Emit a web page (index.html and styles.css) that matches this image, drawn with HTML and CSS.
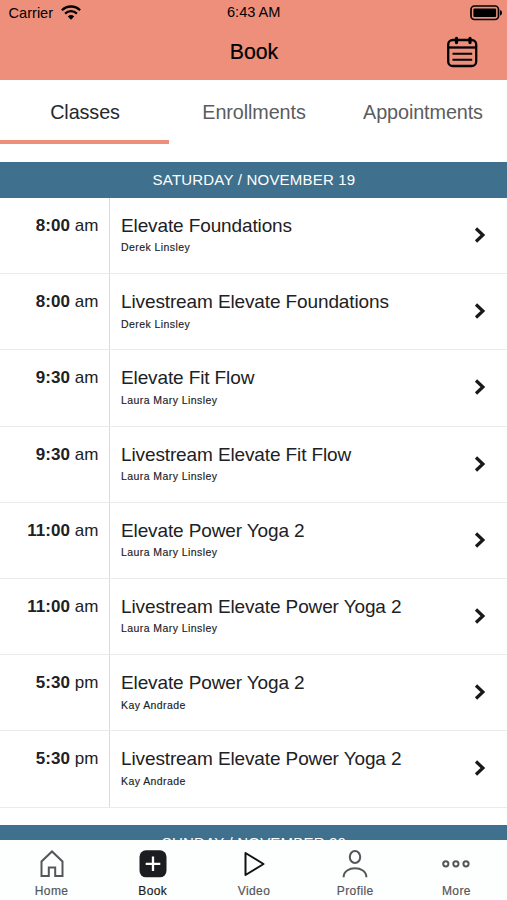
FILE: index.html
```html
<!DOCTYPE html>
<html lang="en">
<head>
<meta charset="utf-8">
<title>Book</title>
<link rel="stylesheet" href="styles.css">
</head>
<body>
<div class="app">
  <header class="header">
    <div class="status">
      <div class="carrier">Carrier
        <svg class="wifi" width="20" height="15" viewBox="0 0 20 15" fill="none" stroke="#000" stroke-width="2.3"><path d="M.9 5.2a13 13 0 0 1 18.2 0M4.1 8.6a8.5 8.5 0 0 1 11.8 0"/><path d="M6.8 11.5a4.8 4.8 0 0 1 6.4 0L10 14.7z" fill="#000" stroke="none"/></svg>
      </div>
      <div class="clock">6:43 AM</div>
      <svg class="battery" width="33" height="16" viewBox="0 0 33 16"><rect x="1" y="1" width="27.5" height="13.5" rx="3.5" fill="none" stroke="#000" stroke-width="1.7"/><rect x="3.4" y="3.4" width="22.7" height="8.7" rx="1"/><path d="M30 5c2.7.6 2.7 5 0 5.600z"/></svg>
    </div>
    <div class="titlebar">
      <h1>Book</h1>
      <svg class="calendar" width="32" height="32" viewBox="0 0 32 32" fill="none" stroke="#000" stroke-width="2.300"><rect x="2.2" y="4" width="28" height="26" rx="4.500"/><path d="M2.200 11.500h28"/><path d="M6.500 17.700h19.700M6.500 23.800h19.700" stroke-width="2.100"/><path d="M10.500 2.500v4M24 2.500v4" stroke-width="3.300" stroke-linecap="round"/></svg>
    </div>
  </header>
  <nav class="tabs">
    <div class="tab active">Classes</div>
    <div class="tab">Enrollments</div>
    <div class="tab">Appointments</div>
  </nav>
  <main class="schedule">
    <h2 class="day">SATURDAY / NOVEMBER 19</h2>
    <ul class="classes">
      <li><div class="time"><b>8:00</b> am</div><div class="info"><h3>Elevate Foundations</h3><p>Derek Linsley</p></div><svg class="chevron" viewBox="0 0 12 16"><path d="M2 1.500l6.900 6.500L2 14.500"/></svg></li>
      <li><div class="time"><b>8:00</b> am</div><div class="info"><h3>Livestream Elevate Foundations</h3><p>Derek Linsley</p></div><svg class="chevron" viewBox="0 0 12 16"><path d="M2 1.500l6.900 6.500L2 14.500"/></svg></li>
      <li><div class="time"><b>9:30</b> am</div><div class="info"><h3>Elevate Fit Flow</h3><p>Laura Mary Linsley</p></div><svg class="chevron" viewBox="0 0 12 16"><path d="M2 1.500l6.900 6.500L2 14.500"/></svg></li>
      <li><div class="time"><b>9:30</b> am</div><div class="info"><h3>Livestream Elevate Fit Flow</h3><p>Laura Mary Linsley</p></div><svg class="chevron" viewBox="0 0 12 16"><path d="M2 1.500l6.900 6.500L2 14.500"/></svg></li>
      <li><div class="time"><b>11:00</b> am</div><div class="info"><h3>Elevate Power Yoga 2</h3><p>Laura Mary Linsley</p></div><svg class="chevron" viewBox="0 0 12 16"><path d="M2 1.500l6.900 6.500L2 14.500"/></svg></li>
      <li><div class="time"><b>11:00</b> am</div><div class="info"><h3>Livestream Elevate Power Yoga 2</h3><p>Laura Mary Linsley</p></div><svg class="chevron" viewBox="0 0 12 16"><path d="M2 1.500l6.900 6.500L2 14.500"/></svg></li>
      <li><div class="time"><b>5:30</b> pm</div><div class="info"><h3>Elevate Power Yoga 2</h3><p>Kay Andrade</p></div><svg class="chevron" viewBox="0 0 12 16"><path d="M2 1.500l6.900 6.500L2 14.500"/></svg></li>
      <li><div class="time"><b>5:30</b> pm</div><div class="info"><h3>Livestream Elevate Power Yoga 2</h3><p>Kay Andrade</p></div><svg class="chevron" viewBox="0 0 12 16"><path d="M2 1.500l6.900 6.500L2 14.500"/></svg></li>
    </ul>
    <h2 class="day">SUNDAY / NOVEMBER 20</h2>
  </main>
  <footer class="tabbar">
    <div class="item"><svg viewBox="0 0 32 32"><path d="M5.500 28V13.500L16 3.500l10.500 10V28h-7.300v-8.500h-6.400V28z"/></svg><span>Home</span></div>
    <div class="item current"><svg viewBox="0 0 32 32"><rect x="2.500" y="2.300" width="27" height="27" rx="6.500" fill="#1c1d20" stroke="none"/><path d="M16 8.500v14.600M8.700 15.800h14.600" stroke="#fff" stroke-width="2.300"/></svg><span>Book</span></div>
    <div class="item video"><svg viewBox="0 0 32 32"><path d="M7.500 5v22L25.500 16z" stroke-linejoin="round"/></svg><span>Video</span></div>
    <div class="item"><svg viewBox="0 0 32 32"><ellipse cx="16" cy="9" rx="5.200" ry="6"/><path d="M4.600 29.300c0-12 22.800-12 22.800 0"/></svg><span>Profile</span></div>
    <div class="item"><svg viewBox="0 0 32 32"><circle cx="5.800" cy="15.800" r="2.600"/><circle cx="15.900" cy="15.800" r="2.600"/><circle cx="26" cy="15.800" r="2.600"/></svg><span>More</span></div>
  </footer>
</div>
</body>
</html>
```
FILE: styles.css
```css
* { box-sizing: border-box; margin: 0; padding: 0; }
body { font-family: "Liberation Sans", Arial, sans-serif; color: #202124; background: #fff; }
.app { display: flex; flex-direction: column; height: 900px; overflow: hidden; }
.header { flex: none; height: 80px; background: #ee8f7b; color: #000; }
.status { display: grid; grid-template-columns: 1fr auto 1fr; align-items: center; height: 25px; padding: 0 4px 0 8.5px; font-size: 14.6px; }
.carrier { display: flex; align-items: center; gap: 8px; }
.clock { padding: 0 4px 2px 0; }
.battery { justify-self: end; }
.titlebar { display: grid; grid-template-columns: 1fr auto 1fr; align-items: center; height: 53px; padding: 0 29px; }
.titlebar h1 { grid-column: 2; padding-left: 1px; font-size: 21.3px; font-weight: 400; line-height: 54px; -webkit-text-stroke: .2px #000; }
.calendar { justify-self: end; }
.tabs { flex: none; display: grid; grid-template-columns: repeat(3, 1fr); height: 64px; }
.tab { height: 64px; padding: 4px 0 0 1px; text-align: center; font-size: 19.8px; line-height: 56px; letter-spacing: -.1px; color: #5b5c60; border-bottom: 4px solid transparent; }
.tab.active { color: #27282c; border-color: #ee8f7b; }
.schedule { flex: 1; min-height: 0; overflow: hidden; padding-top: 18px; }
.day { height: 36px; padding-left: 1px; background: #3f718e; color: #fff; text-align: center; font-size: 15px; font-weight: 400; line-height: 36px; letter-spacing: .2px; }
.classes { list-style: none; margin-bottom: 17.4px; }
.classes li { display: flex; height: 76.2px; border-bottom: 1px solid #e9ebec; }
.time { width: 110px; padding: 17px 10.5px 0 0; text-align: right; font-size: 17px; line-height: 22px; letter-spacing: .04px; border-right: 1px solid #d9dcdf; }
.info { flex: 1; padding: 17px 0 0 11px; }
.info h3 { font-size: 19px; font-weight: 400; line-height: 22px; letter-spacing: -.12px; }
.info p { margin-top: 3.4px; font-size: 10.5px; line-height: 14px; letter-spacing: .43px; -webkit-text-stroke: .15px #202124; }
.chevron { width: 12px; height: 16px; margin: 29px 21px 0 0; overflow: visible; fill: none; stroke: #18191b; stroke-width: 3.2; }
.tabbar { flex: none; display: grid; grid-template-columns: repeat(5, 1fr); height: 60px; padding: 8px 0 0 1px; background: #fdfefe; }
.item { display: flex; flex-direction: column; align-items: center; color: #55565a; font-size: 12px; letter-spacing: .4px; }
.item svg { width: 32px; height: 32px; fill: none; stroke: currentColor; stroke-width: 2; }
.item span { margin-top: 4px; line-height: 14px; -webkit-text-stroke: .2px currentColor; }
.current { color: #1c1d20; }
.video svg { stroke: #111214; }
```
